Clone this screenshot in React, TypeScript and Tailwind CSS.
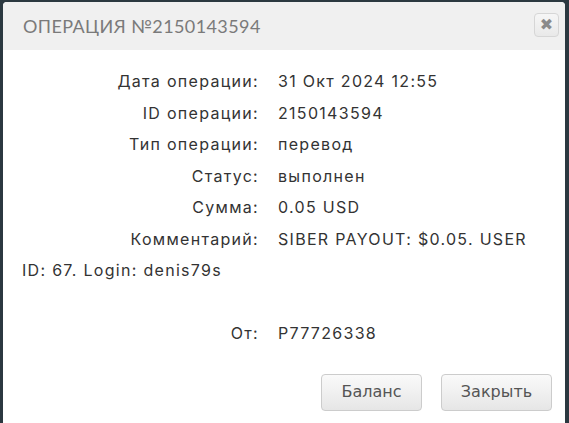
const rows = [
  { label: 'Дата операции:', value: '31 Окт 2024 12:55' },
  { label: 'ID операции:', value: '2150143594' },
  { label: 'Тип операции:', value: 'перевод' },
  { label: 'Статус:', value: 'выполнен' },
  { label: 'Сумма:', value: '0.05 USD' },
]

function Row({ label, children }: { label: string; children: React.ReactNode }) {
  return (
    <div>
      <span className="inline-block w-[237px] mr-[19px] text-right">{label}</span>
      {children}
    </div>
  )
}

export default function App() {
  return (
    <div className="w-[569px] h-[423px] overflow-hidden bg-[#2b3840] pt-[2px] pl-[3px] pr-[4px]">
      <div className="h-[440px] bg-white rounded-t-[4px] flex flex-col">
        {/* Header */}
        <div className="h-[48px] bg-[#f0f0f0] rounded-t-[4px] flex items-center justify-between pl-[20px] pr-[6px]">
          <h2
            className="text-[18px] uppercase tracking-[0.4px] text-[#7a7a7a] pt-[1px]"
            style={{ fontFamily: 'Lato, sans-serif' }}
          >
            Операция №2150143594
          </h2>
          <button
            className="w-[25px] h-[24px] mb-[2px] rounded-[4px] border border-[#d6d6d6] bg-gradient-to-b from-[#f6f6f6] to-[#e9e9e9] flex items-center justify-center text-[16px] leading-none text-[#8a8a8a]"
            style={{ fontFamily: '"DejaVu Sans", sans-serif' }}
          >
            ✖
          </button>
        </div>

        {/* Content */}
        <div
          className="px-[19px] pt-[16px] text-[16px] leading-[31.5px] tracking-[1.3px] text-[#333]"
          style={{ fontFamily: 'Inter, sans-serif' }}
        >
          {rows.map((r) => (
            <Row key={r.label} label={r.label}>
              {r.value}
            </Row>
          ))}
          <Row label="Комментарий:">
            SIBER PAYOUT: $0.05. USER
            <br />
            ID: 67. Login: denis79s
          </Row>
          <div className="h-[31.5px]" />
          <Row label="От:">P77726338</Row>
        </div>

        {/* Footer */}
        <div
          className="flex justify-end gap-[19px] pr-[13px] mt-[24px]"
          style={{ fontFamily: '"DejaVu Sans", sans-serif' }}
        >
          <button className="w-[101px] h-[37px] rounded-[4px] border border-[#ccc] bg-gradient-to-b from-[#fafafa] to-[#e6e6e6] text-[16px] text-[#555]">
            Баланс
          </button>
          <button className="w-[111px] h-[37px] rounded-[4px] border border-[#ccc] bg-gradient-to-b from-[#fafafa] to-[#e6e6e6] text-[16px] text-[#555]">
            Закрыть
          </button>
        </div>
      </div>
    </div>
  )
}
